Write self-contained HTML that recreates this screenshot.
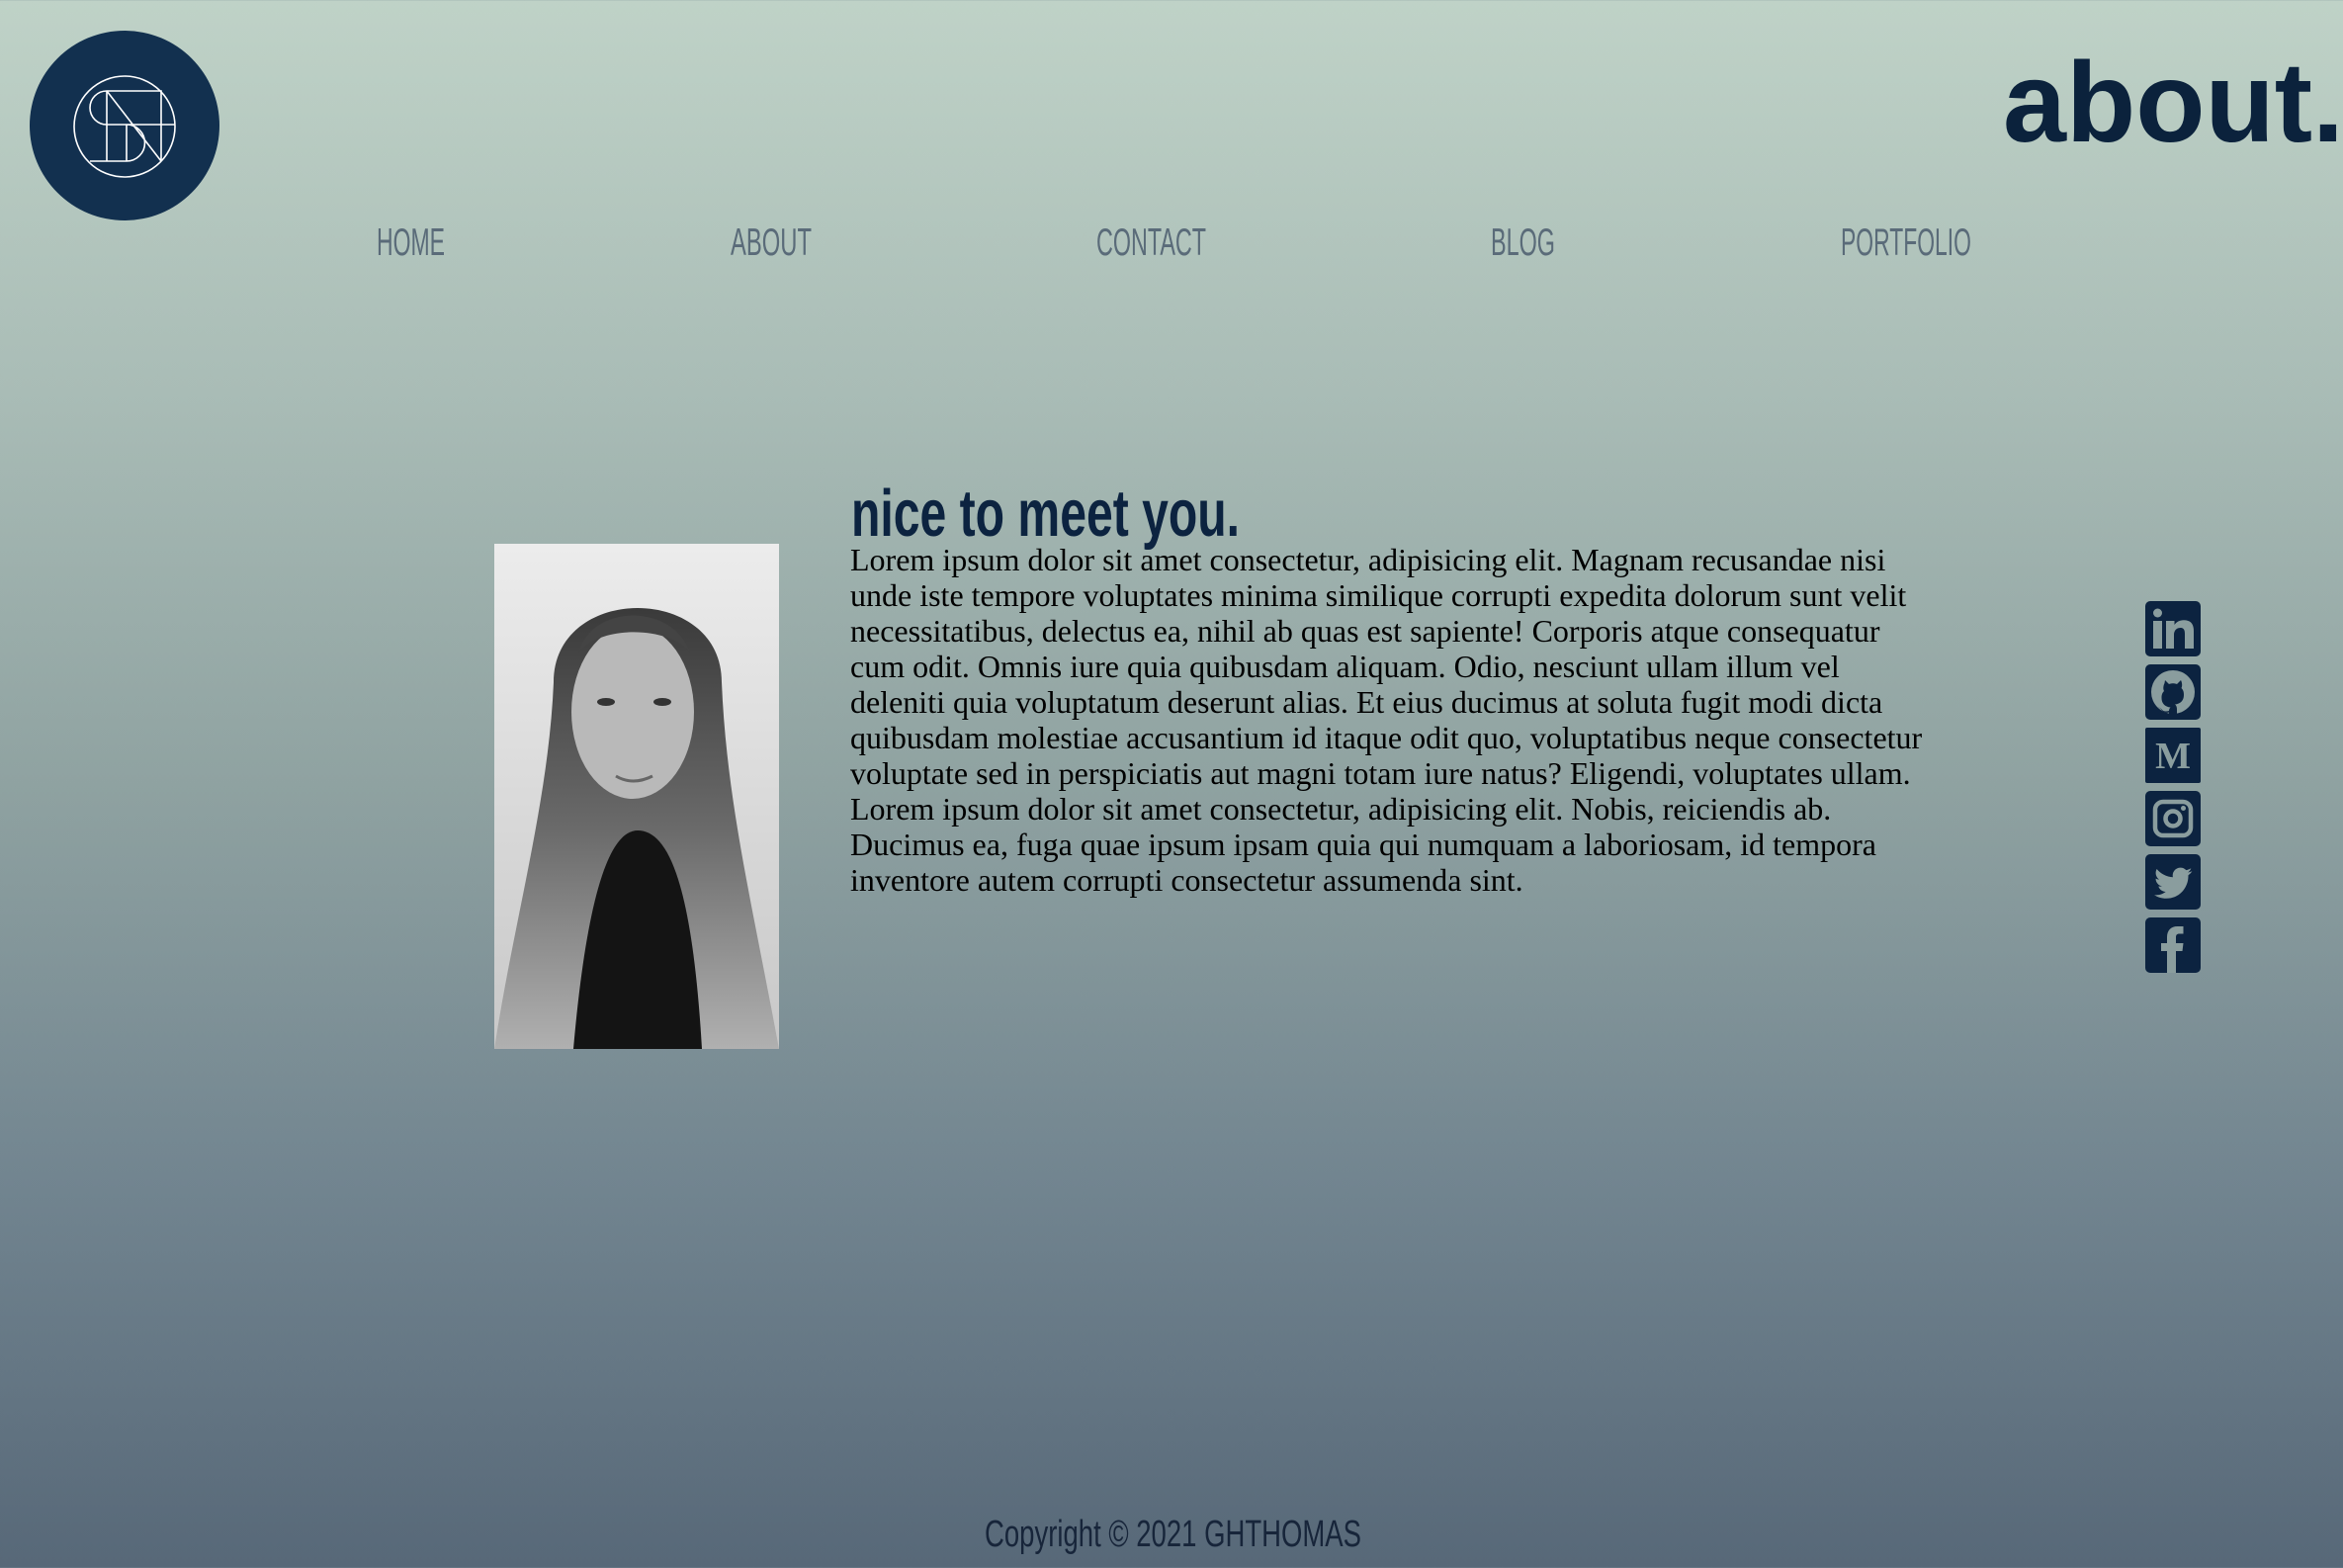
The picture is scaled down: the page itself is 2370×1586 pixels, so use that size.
<!DOCTYPE html>
<html><head><meta charset="utf-8"><style>
html,body{margin:0;padding:0}
body{width:2370px;height:1586px;overflow:hidden;position:relative;background:linear-gradient(180deg,#bfd2c7 0%,#a9bcb6 25%,#8fa2a1 50%,#728590 75%,#576878 100%);font-family:"Liberation Sans",sans-serif}
.abs{position:absolute}
.body{left:860px;top:548px;font-family:"Liberation Serif",serif;font-size:32px;line-height:36px;color:#000;white-space:nowrap}
</style></head><body>
<svg class="abs" style="left:0;top:0" width="260" height="260" viewBox="0 0 260 260">
<circle cx="126" cy="127" r="96" fill="#12304f"/>
<g fill="none" stroke="#fff" stroke-width="1.6">
<circle cx="126" cy="128" r="51"/>
<path d="M108 92 H163 V163 M108 92 V163 M108 92 L163 163 M108 126 H177 M128 126 V163 M91 163 H128 M128 126 A18.5 18.5 0 0 1 128 163 M108 92 A17 17 0 0 0 108 126"/>
</g>
</svg>
<div class="abs" style="left:2026px;top:38px;font-size:115px;font-weight:bold;color:#0b223c;letter-spacing:0px">about.</div>
<svg class="abs" style="left:0;top:220px" width="2370" height="50">
<g font-family="Liberation Sans" font-size="39" fill="#5a6b79">
<text x="381" y="38" textLength="69" lengthAdjust="spacingAndGlyphs">HOME</text>
<text x="739" y="38" textLength="82" lengthAdjust="spacingAndGlyphs">ABOUT</text>
<text x="1109" y="38" textLength="111" lengthAdjust="spacingAndGlyphs">CONTACT</text>
<text x="1508" y="38" textLength="65" lengthAdjust="spacingAndGlyphs">BLOG</text>
<text x="1862" y="38" textLength="132" lengthAdjust="spacingAndGlyphs">PORTFOLIO</text>
</g></svg>
<svg class="abs" style="left:0;top:480px" width="1400" height="80">
<text x="861" y="62" font-family="Liberation Sans" font-weight="bold" font-size="67" fill="#0c2340" textLength="393" lengthAdjust="spacingAndGlyphs">nice to meet you.</text>
</svg>
<svg class="abs" style="left:500px;top:550px" width="288" height="511" viewBox="0 0 288 511">
<defs><linearGradient id="bg" x1="0" y1="0" x2="0" y2="1"><stop offset="0" stop-color="#ececec"/><stop offset="1" stop-color="#c8c8c8"/></linearGradient>
<linearGradient id="hair" x1="0" y1="0" x2="0" y2="1"><stop offset="0" stop-color="#3a3a3a"/><stop offset=".5" stop-color="#6a6a6a"/><stop offset="1" stop-color="#b0b0b0"/></linearGradient></defs>
<rect width="288" height="511" fill="url(#bg)"/>
<path d="M60 140 C60 40 230 40 230 140 C235 260 260 360 288 511 H0 C20 380 55 260 60 140Z" fill="url(#hair)"/>
<path d="M80 511 C95 340 120 290 145 290 C175 290 200 340 210 511Z" fill="#141414"/>
<ellipse cx="140" cy="170" rx="62" ry="88" fill="#b9b9b9"/>
<path d="M85 110 C100 60 180 60 198 110 C180 85 110 80 85 110Z" fill="#444"/>
<ellipse cx="113" cy="160" rx="9" ry="4" fill="#333"/><ellipse cx="170" cy="160" rx="9" ry="4" fill="#333"/>
<path d="M123 235 Q140 245 160 235" stroke="#666" stroke-width="3" fill="none"/>
</svg>
<div class="abs body">Lorem ipsum dolor sit amet consectetur, adipisicing elit. Magnam recusandae nisi<br>unde iste tempore voluptates minima similique corrupti expedita dolorum sunt velit<br>necessitatibus, delectus ea, nihil ab quas est sapiente! Corporis atque consequatur<br>cum odit. Omnis iure quia quibusdam aliquam. Odio, nesciunt ullam illum vel<br>deleniti quia voluptatum deserunt alias. Et eius ducimus at soluta fugit modi dicta<br>quibusdam molestiae accusantium id itaque odit quo, voluptatibus neque consectetur<br>voluptate sed in perspiciatis aut magni totam iure natus? Eligendi, voluptates ullam.<br>Lorem ipsum dolor sit amet consectetur, adipisicing elit. Nobis, reiciendis ab.<br>Ducimus ea, fuga quae ipsum ipsam quia qui numquam a laboriosam, id tempora<br>inventore autem corrupti consectetur assumenda sint.</div>
<svg class="abs" style="left:2170px;top:608px" width="56" height="376" viewBox="0 0 56 376">
<g fill="#0c2340">
<rect x="0" y="0" width="56" height="56" rx="5"/><rect x="0" y="64" width="56" height="56" rx="5"/><rect x="0" y="128" width="56" height="56" rx="2"/><rect x="0" y="192" width="56" height="56" rx="5"/><rect x="0" y="256" width="56" height="56" rx="5"/><rect x="0" y="320" width="56" height="56" rx="5"/>
</g>
<g fill="#8a9d9e">
<circle cx="12.5" cy="12" r="4.5"/><rect x="8" y="20" width="9" height="28"/>
<path d="M21 20h8.5v4c2-3 5-4.8 9.5-4.8c7 0 10 4 10 11v17.8h-9v-15c0-4-1.2-6-4.5-6c-4 0-6.5 3-6.5 7v14h-8z"/>
<circle cx="28" cy="92" r="22"/>
<path fill="#0c2340" d="M20 80 l4 4 c2.5-1 5.5-1 8 0 l4-4 c1.5 3 1.5 6 0.5 8 c2 2 2.5 4 2.5 7 c0 6-4 9-9 9.5 c1.5 1 2 3 2 5 v6 h-8 v-3 c-3 1-6 0-8-3 c-1-1.5-2.5-2-3.5-2 c2 0 3.5 1 4.5 2.5 c1.5 1.5 3.5 2 7 1 c0-1.5 0.5-2.5 1.5-3.5 c-5-0.5-9-3.5-9-9.5 c0-3 0.5-5 2.5-7 c-1-2-1-5 0.5-8z"/>
<text x="28" y="169" text-anchor="middle" font-family="Liberation Serif" font-weight="bold" font-size="38">M</text>
<path fill="none" stroke="#8a9d9e" stroke-width="4.5" d="M18 203h20a8 8 0 0 1 8 8v18a8 8 0 0 1-8 8h-20a8 8 0 0 1-8-8v-18a8 8 0 0 1 8-8z"/>
<circle cx="28" cy="220" r="7.5" fill="none" stroke="#8a9d9e" stroke-width="4.5"/>
<circle cx="38.5" cy="209.5" r="2.5"/>
<g transform="translate(9,266) scale(0.075)"><path d="M459.37 151.716c.325 4.548.325 9.097.325 13.645 0 138.72-105.583 298.558-298.558 298.558-59.452 0-114.68-17.219-161.137-47.106 8.447.974 16.568 1.299 25.34 1.299 49.055 0 94.213-16.568 130.274-44.832-46.132-.975-84.792-31.188-98.112-72.772 6.498.974 12.995 1.624 19.818 1.624 9.421 0 18.843-1.3 27.614-3.573-48.081-9.747-84.143-51.980-84.143-102.985v-1.299c13.969 7.797 30.214 12.670 47.431 13.319-28.264-18.843-46.781-51.005-46.781-87.391 0-19.492 5.197-37.360 14.294-52.954 51.655 63.675 129.300 105.258 216.365 109.807-1.624-7.797-2.599-15.918-2.599-24.040 0-57.828 46.782-104.934 104.934-104.934 30.213 0 57.502 12.670 76.670 33.137 23.715-4.548 46.456-13.320 66.599-25.340-7.798 24.366-24.366 44.833-46.132 57.827 21.117-2.273 41.584-8.122 60.426-16.243-14.292 20.791-32.161 39.308-52.628 54.253z"/></g>
<path d="M22 376v-22h-6v-8h6v-6c0-7 4-11 10.5-11h6v7.5h-4c-2.5 0-3.5 1.2-3.5 3.5v6h7.5l-1 8h-6.5v22z"/>
</g>
</svg>
<svg class="abs" style="left:0;top:1525px" width="2370" height="50">
<text x="996" y="39" font-family="Liberation Sans" font-size="38" fill="#17253a" textLength="381" lengthAdjust="spacingAndGlyphs">Copyright © 2021 GHTHOMAS</text>
</svg>
</body></html>
